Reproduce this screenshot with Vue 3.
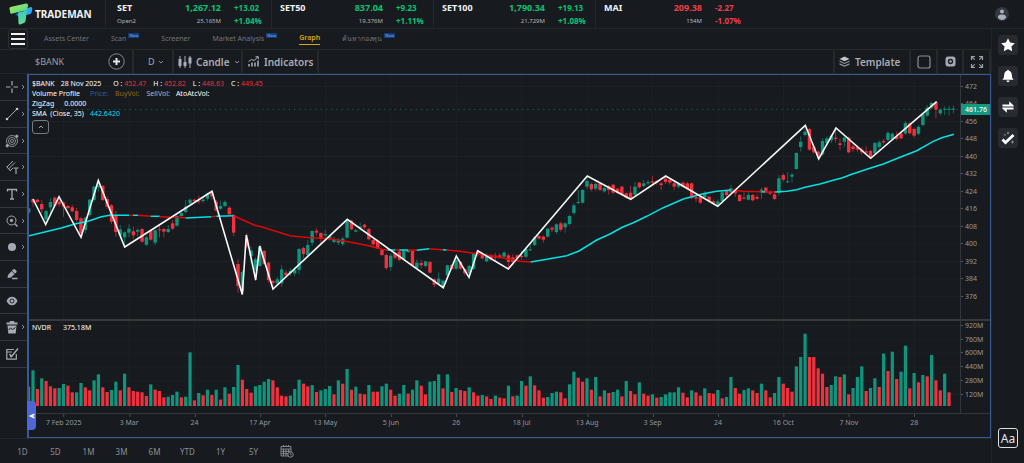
<script setup>
const tickers = [
  { name: 'SET', sub: 'Open2', value: '1,267.12', vol: '25,165M', diff: '+13.02', pct: '+1.04%', up: true },
  { name: 'SET50', sub: '', value: '837.04', vol: '19,376M', diff: '+9.23', pct: '+1.11%', up: true },
  { name: 'SET100', sub: '', value: '1,790.34', vol: '21,729M', diff: '+19.13', pct: '+1.08%', up: true },
  { name: 'MAI', sub: '', value: '209.38', vol: '154M', diff: '-2.27', pct: '-1.07%', up: false },
]
const nav = [
  { text: 'Assets Center' },
  { text: 'Scan', badge: true },
  { text: 'Screener' },
  { text: 'Market Analysis', badge: true },
  { text: 'Graph', active: true },
  { text: 'ค้นหากองทุน', badge: true },
]
const ranges = ['1D', '5D', '1M', '3M', '6M', 'YTD', '1Y', '5Y']
const tools = [
  { id: 'cross', label: 'Crosshair', more: true },
  { id: 'line', label: 'Trend line', more: true },
  { id: 'fib', label: 'Fibonacci', more: true },
  { id: 'pitch', label: 'Pitchfork', more: true },
  { id: 'text', label: 'Text', more: true },
  { id: 'zoom', label: 'Zoom', more: true },
  { id: 'dot', label: 'Magnet', more: true },
  { id: 'pen', label: 'Pen', more: false },
  { id: 'eye', label: 'Visibility', more: false },
  { id: 'trash', label: 'Delete', more: true },
  { id: 'note', label: 'Note', more: false },
]

/* plot area, in chart units */
const X0 = 29
const Y0 = 75
const W = 931
const H = 338
const STEP = 4.362
const xOf = (i) => 33 + (i - 1) * STEP

/* volume bars: colour + height in thirds of a unit */
const volumeText =
  'g58 g107 r51 g83 r75 r59 r53 g54 g66 r61 r41 g41 g69 r56 r47 g77 g95 r56 r42 g48 g73 r47 g97 r56 r45 r43 r41 r30 g65 r49 r45 r26 g28 g33 g43 r26 g28 g161 r17 g39 r32 g49 r33 g49 r19 g56 r37 g57 g123 r79 r51 r40 g59 g63 g73 g81 r77 r56 r31 r29 g31 g51 g79 r67 r59 g63 r42 g47 g51 g60 r35 g77 ' +
  'r67 g111 r49 g58 r37 r35 g63 r43 r43 g59 g67 r49 r31 g37 g63 r37 g49 g77 r61 r35 g73 g75 g95 r53 g95 r42 g54 r48 r45 g56 r41 r31 g33 r29 r21 g31 r25 r23 g61 r29 g31 g75 r61 g89 r62 r47 r25 g27 g39 g43 r41 r23 g65 g103 r85 r73 g83 r49 g87 r29 g47 r39 g42 g49 r29 g75 r45 r35 g71 r37 r31 g35 r25 g27 g35 g41 g41 g56 ' +
  'r40 r26 g47 r41 r31 g53 r39 r37 g48 r23 g27 g87 r54 r37 g48 g53 r47 r39 g67 r47 r26 g39 g87 r67 r54 r43 g119 g147 g217 r147 r147 r113 r97 r57 g63 g89 r87 g95 r35 g54 g87 g119 r45 g54 g83 r57 g157 r105 g163 r81 g103 g181 r53 g99 r71 g93 r89 g153 r77 r47 g97 r41'
const volumes = volumeText.split(' ').map((s, i) => ({
  x: xOf(i),
  h: Number(s.slice(1)) / 3,
  up: s[0] === 'g',
}))

/* candles: colour, body top, body bottom [, wick top, wick bottom] in thirds below base */
const segments = [
  { from: 0, base: 450, data:
    'g175,188 r148,157,146,170 r149,156 r162,178,150,190 g183,208,180,215 g156,172,145,190 r143,167 r155,163,145,170 r158,170,155,200 r168,174 r172,184,165,187 r183,210,174,215 r205,250,200,262 g203,240,200,250 g149,195,147,200 g110,150,107,155 g108,112,90,125 r108,150 r147,170,140,176 r166,215,162,222 r195,246,182,260 g238,256,225,268 g247,262,244,288 g236,248,223,262 r244,256,230,268 g240,245,235,260 r237,275 g262,284,258,288 r242,269 g241,278,236,285 r238,241,225,262 r237,245,234,262 g237,246,225,249 r220,236,210,240 g198,227,194,230 g189,198 g170,186,150,190 g149,160,146,165 r149,153 r152,155,137,162 g149,153,140,160 g130,146,128,152 r127,139,122,148 r155,182,150,185 g168,176,152,180 g156,168,150,172 r173,193,168,197 r195,248,192,258 r342,408,328,428 g366,425,360,435 r268,290,250,295 g302,318,290,340 g328,360,322,392 g290,348,285,350 r303,342 r338,390,335,398 r393,399,390,415 g388,400,380,404' },
  { from: 58, base: 570, data:
    'g238,280,226,290 r248,256,240,262 g243,250,235,258 g240,250,232,258 g177,240,174,252 r174,192,170,206 g165,195,150,200 g123,158,121,168 r122,128,114,137 r129,145,127,165 g132,136,120,142 g139,148,136,152 g149,156,140,160 g153,158,144,165 g146,162,140,168 g90,143,88,146 r92,118 g121,125,117,127 g110,114,98,122 r104,112,102,118 r117,148 r150,163,146,172 r152,175,148,178 r180,195 r195,234,190,240 g197,231,190,242 r190,203,186,208 r185,210,182,213 g182,208,178,210 g180,186 r183,226 g218,234,208,238 r219,226,210,236 g214,228,212,232 r216,248,213,250 r268,284,264,292 g266,280,248,284 g272,288 g226,256,224,262 r225,237,222,240 g210,236,205,240 r216,236 r238,250,236,256 g228,250,224,258 g192,236,188,240 r183,193,180,200 r192,205 g196,214,190,217 r195,209 r197,203,188,212' },
  { from: 108, base: 480, data:
    'r286,292,280,296 g278,290,273,294 r286,306,280,324 r292,306,282,316 r286,294 r287,291,272,300 g267,290,262,294 g268,271,248,273 g232,255 r228,236 r230,239,226,248 g206,230 r203,209,200,216 g193,216,190,222 r190,209,185,215 g190,202,187,218 g168,192,164,196 g136,159,130,164 g126,129,90,133 g90,128 g63,80,50,88 r72,88,68,94 g72,86,66,92 r70,90 g84,94,78,98 r78,90,74,104 r74,98,72,102 r86,98,84,102 r80,104 r100,113,97,116 r98,116,78,118 g80,104,66,108 r68,82,66,86 g70,78,60,82 g66,70,60,76 r64,68,48,78 r63,68,60,74 r70,75,66,90 r56,66,50,72 r60,68,56,74 r70,80,66,90 g72,80,68,86 r68,80,65,84 r70,86,66,90 r70,114 r112,116,106,126 r110,128,104,132 g100,112,94,116 r110,124 r124,130,118,136 g124,134,118,140' },
  { from: 159, base: 225, data:
    'g352,378,346,382 r348,360,344,366 g340,352,330,356 r347,355,344,366 r360,378 r368,371,350,373 g360,374,352,376 r360,376 r366,371,358,374 g344,352,338,372 r338,352,336,356 r350,356,346,360 r358,372,350,376 g310,354,300,362 r300,314,295,320 g319,322,292,324 g299,305,295,322 g234,282,232,284 g200,216,184,230 g170,180,152,184 r162,224 r215,232,210,236 r230,242,226,252 g198,238,190,242 g190,204,184,210 g182,196,178,204 r188,192,160,202 r205,210,190,225 g188,200,184,215 r188,232 r214,222,208,230 r217,224,212,232 r224,232,216,238 r229,233,214,236 r228,246,224,250 g204,235,200,240 g202,216,196,230 r198,202,192,208 g174,195,168,200 g176,192,172,196 r184,192,170,196 r176,190,168,192 g144,175,138,180 r145,175 r162,182,158,188 g156,176,150,180 g118,150,114,154 g98,122,90,126 g84,98,80,102 r82,104,78,130 g104,115,100,122 g101,104,94,120 g101,104,92,122 g101,104,92,115' },
]
const candles = segments.flatMap((seg) =>
  seg.data.split(' ').map((s, k) => {
    const n = s.slice(1).split(',').map((v) => (Number(v) + seg.base) / 3)
    return {
      x: xOf(seg.from + k),
      up: s[0] === 'g',
      top: n[0],
      h: Math.max(1, n[1] - n[0]),
      hi: n[2] ?? n[0] - 1,
      lo: n[3] ?? n[1] + 1,
    }
  }),
)

const zigzag =
  '33,199 45.7,224.5 59,196.7 81,237.3 98.3,180.5 124.7,247 212,191.3 242.3,294.5 246.3,235 255.7,280 259.7,246 273,289 347.3,219.3 443.3,287.7 456.3,256 469,277.3 477.7,250.7 508.3,269 587.3,176 630.7,199.3 665.7,176 717.7,206.3 805.3,125.3 818.7,159 836,128 870.7,158.3 936.7,101.7'

const sma = [
  { up: true, pts: '29,235.7 44.7,232 61.3,228 74.7,224 88,221.3 101.3,216.7 109.7,215.3 129,215.3' },
  { up: false, pts: '129,215.3 133,215.3' },
  { up: true, pts: '133,215.3 138,215.3' },
  { up: false, pts: '138,215.3 150.7,216.3' },
  { up: true, pts: '150.7,216.3 159.7,216.3' },
  { up: false, pts: '159.7,216.7 185.7,217.7' },
  { up: true, pts: '185.7,218 211.3,216.7' },
  { up: false, pts: '211.3,216.7 216.3,216.3' },
  { up: true, pts: '216.3,216.3 233.7,215.7' },
  { up: false, pts: '233.7,215.7 241.3,219.3 254.7,225.3 261.3,226.7 290,235.7 310,237.7 330,238.7 350,242 370,246 381.7,249.3 387.3,250' },
  { up: true, pts: '387.3,250 395.3,250' },
  { up: false, pts: '395.3,250 399.3,250' },
  { up: true, pts: '399.3,250 408,250' },
  { up: false, pts: '408,250 416.7,250.3' },
  { up: true, pts: '416.7,250.3 429.3,248.7' },
  { up: false, pts: '429.3,248.7 442.7,249.7' },
  { up: true, pts: '442.7,249.7 446.7,250' },
  { up: false, pts: '446.7,250 460,251.3 473.3,253.3 493.3,256 508.3,259 520,261.3 530.7,262' },
  { up: true, pts: '530.7,262 546.7,259.3 566.7,255.7 579,251 596.7,240 610,234 622.3,227.3 633.3,222.7 646.7,216.3 663.3,207.7 683.3,199 703.3,193.7 716.7,191.3 731.3,190' },
  { up: false, pts: '731.3,190 743.3,191.3 761.7,191.7' },
  { up: true, pts: '761.7,191.7 765,192' },
  { up: false, pts: '765,192 775,192' },
  { up: true, pts: '775,192 786.7,191.3 796.7,189.7 805,187.3 820,184 835,179.7 841.7,178 853.3,173.7 866.7,169.3 883.3,164 900,157.3 916.7,150.7 933.3,141.3 941.7,137.7 954,134.3' },
]

const prices = [472, 464, 456, 448, 440, 432, 424, 416, 408, 400, 392, 384, 376].map((v, i) => ({
  text: String(v),
  y: 86.5 + i * 17.5,
}))
const volTicks = ['920M', '760M', '600M', '440M', '280M', '120M'].map((text, i) => ({
  text,
  y: 326 + i * 13.7,
}))
const dates = ['7 Feb 2025', '3 Mar', '24', '17 Apr', '13 May', '5 Jun', '26', '18 Jul', '13 Aug', '3 Sep', '24', '16 Oct', '7 Nov', '28'].map((text, i) => ({
  text,
  x: 63.7 + i * 65.43,
}))
const pctX = (x) => ((x - X0) / W) * 100 + '%'
const pctY = (y) => ((y - Y0) / H) * 100 + '%'
</script>

<template>
  <div class="app">
    <header class="top">
      <a class="brand" href="#">
        <svg class="logo" viewBox="0 0 24 22" aria-hidden="true">
          <defs>
            <linearGradient id="lg1" x1="0" y1="0" x2="1" y2="1">
              <stop offset="0" stop-color="#b4ee52" /><stop offset="1" stop-color="#3ecf9c" />
            </linearGradient>
            <linearGradient id="lg2" x1="0" y1="0" x2="0" y2="1">
              <stop offset="0" stop-color="#3ec7c4" /><stop offset="1" stop-color="#5fe08a" />
            </linearGradient>
          </defs>
          <path d="M15 6 L22 4 Q23.500 4 23.300 6 L22.600 9.500 Q22 11 20.500 11.300 L15 12.500z" fill="#2ea8f0" />
          <path d="M6 11 L10 10.500 V14z" fill="#2468e8" />
          <path d="M1.500 4 L17 .500 Q19.500 .300 19 3 L18 7 L2.500 10.800 Q1.500 11 1.200 9.500 L.500 5.500 Q.400 4.300 1.500 4z" fill="url(#lg1)" />
          <path d="M9 9.500 L18 7.200 L16.500 18 Q16.300 19.500 15 20 L11 21.500 Q9.500 21.800 9.500 20z" fill="url(#lg2)" />
        </svg>
        <span class="brand-name">TRADEMAN</span>
      </a>
      <div v-for="t in tickers" :key="t.name" class="ticker" :class="t.up ? 'up' : 'down'">
        <div class="col names"><b>{{ t.name }}</b><small>{{ t.sub }}</small></div>
        <div class="col values"><b class="num">{{ t.value }}</b><small>{{ t.vol }}</small></div>
        <div class="col diffs"><b>{{ t.diff }}</b><b>{{ t.pct }}</b></div>
      </div>
      <button class="avatar" aria-label="Account">
        <svg viewBox="0 0 14 14"><circle cx="7" cy="7" r="7" fill="#333841" /><circle cx="7" cy="4.500" r="2" fill="#a9b0bd" /><path d="M2.800 10.500 Q3 7.500 7 7.500 T11.200 10.500 Q9.500 13 7 13 T2.800 10.500z" fill="#a9b0bd" /></svg>
      </button>
    </header>

    <div class="body">
      <main class="main">
        <nav class="nav">
          <button class="burger" aria-label="Menu"><i></i><i></i><i></i></button>
          <a v-for="n in nav" :key="n.text" href="#" class="nav-item" :class="{ active: n.active }">
            <span class="nav-text">{{ n.text }}</span><span v-if="n.badge" class="badge">New</span>
          </a>
        </nav>

        <div class="toolbar">
          <label class="symbol"><input type="text" value="$BANK" aria-label="Symbol" /></label>
          <div class="cell add"><button class="plus" aria-label="Add symbol">
            <svg viewBox="0 0 17 17"><circle cx="8.500" cy="8.500" r="7.700" fill="none" stroke="#84888f" /><path d="M8.500 5v7M5 8.500h7" stroke="#e2e5ea" stroke-width="2" /></svg>
          </button></div>
          <button class="cell period">D
            <svg class="chev" viewBox="0 0 6 6"><path d="M1 2l2 2 2-2" /></svg>
          </button>
          <button class="cell style"><svg class="ic14" viewBox="0 0 14 14"><path d="M2 1v12M7 1v12M12 1v12" stroke="#aab0bb" /><path d="M.500 4h3v7h-3zM5.500 7h3v4h-3zM10.500 2.500h3v6h-3z" fill="#aab0bb" /></svg>
            <b>Candle</b>
            <svg class="chev end" viewBox="0 0 6 6"><path d="M1 2l2 2 2-2" /></svg>
          </button>
          <button class="cell ind"><svg class="ic11" viewBox="0 0 11 11"><path d="M.500 5.500L3.500 3.500 6 4.500 10 1M7.500 .700h2.800v2.600" fill="none" stroke="#aab0bb" /><path d="M1 10.500V8M4 10.500V6.500M7 10.500V6.500M10 10.500V4.500" stroke="#aab0bb" stroke-width="1.500" /></svg>
            <b>Indicators</b>
          </button>
          <span class="spacer"></span>
          <button class="cell tpl"><svg class="ic11" viewBox="0 0 11 11"><path d="M5.500 .500l5 2.400-5 2.400-5-2.400z" fill="#c4c8cf" /><path d="M.500 4.600l5 2.300 5-2.300v1.200l-5 2.300-5-2.300zM.500 7.300l5 2.300 5-2.300v1.200l-5 2.300-5-2.300z" fill="#989da6" /></svg>
            <b>Template</b>
          </button>
          <button class="cell sq" aria-label="Layout"><svg class="ic14" viewBox="0 0 14 14"><rect x="1" y="1" width="12" height="12" rx="2" fill="none" stroke="#8b9099" stroke-width="1.200" /></svg></button>
          <button class="cell sq mid" aria-label="Settings"><svg class="ic11" viewBox="0 0 11 11"><rect x=".500" y=".500" width="10" height="10" rx="2.500" fill="#a3a9b4" /><circle cx="5.500" cy="5.500" r="2" fill="none" stroke="#171a1e" stroke-width="1.300" /></svg></button>
          <button class="cell sq" aria-label="Full screen"><svg class="ic14" viewBox="0 0 14 14" fill="none" stroke="#9ba0aa" stroke-width="1.200"><path d="M1.500 5V1.500H5M1.500 1.500l3.200 3.200M9 1.500h3.500V5M12.500 1.500L9.300 4.700M1.500 9v3.500H5M1.500 12.500l3.200-3.200M9 12.500h3.500V9M12.500 12.500L9.300 9.300" /></svg></button>
        </div>

        <div class="work">
          <div class="tools">
            <button v-for="t in tools" :key="t.id" class="tool" :aria-label="t.label">
              <svg class="tool-ic" viewBox="0 0 14 14" fill="none" stroke="#a4a9b3" stroke-width="1">
                <path v-if="t.id === 'cross'" d="M7 1v4.500M7 8.500V13M1 7h4.500M8.500 7H13" stroke-width="1.200" />
                <g v-if="t.id === 'line'"><path d="M2.500 11.500l9-9" /><circle cx="2" cy="12" r="1.300" fill="#c3c7ce" stroke="none" /><circle cx="12" cy="2" r="1.300" fill="#c3c7ce" stroke="none" /></g>
                <g v-if="t.id === 'fib'" stroke-width=".8"><circle cx="7" cy="7" r="5.500" /><circle cx="7" cy="7" r="3.500" /><circle cx="7" cy="7" r="1.500" /><circle cx="2.200" cy="11.800" r="1.200" fill="#a4a9b3" /><circle cx="11.800" cy="2.200" r="1.200" fill="#a4a9b3" /></g>
                <g v-if="t.id === 'pitch'"><path d="M2 7L8 1M3.500 9L10 2.500M5 11l3-3M1.500 6.500l4 4.500" /><path d="M8.500 8h5M11 8v6" stroke-width="1.200" /></g>
                <path v-if="t.id === 'text'" d="M2.500 4.500v-2h9v2M7 2.500v9.500M5 12h4" stroke-width="1.300" />
                <g v-if="t.id === 'zoom'"><circle cx="6.500" cy="6.500" r="4.500" /><circle cx="6.500" cy="6.500" r="1.200" fill="#a4a9b3" /><path d="M9.800 9.800l2.700 2.700" stroke-width="1.500" /></g>
                <circle v-if="t.id === 'dot'" cx="7" cy="7" r="4" fill="#a4a9b3" stroke="none" />
                <g v-if="t.id === 'pen'"><path d="M2.500 11L3 8l5-5.500q1-1 2.200 0l1 1q1 1 0 2L6 10.500z" fill="#a4a9b3" stroke="none" /><path d="M6.500 3.700l3.500 3.500" stroke="#171a1e" stroke-width=".8" /><path d="M7 11.500h5.500" stroke-width="1.500" /></g>
                <g v-if="t.id === 'eye'"><path d="M1.500 7Q3.500 2.800 7 2.800T12.500 7Q10.500 11.200 7 11.200T1.500 7z" fill="#a4a9b3" stroke="none" /><circle cx="7" cy="7" r="2" stroke="#171a1e" stroke-width=".9" /></g>
                <g v-if="t.id === 'trash'"><path d="M1.500 3.500h11M5 2h4M4.500 2.500h5" stroke-width="1.800" /><path d="M2.500 5.500h9l-.8 8h-7.400z" fill="#a4a9b3" stroke="none" /><path d="M3.500 10l2-2 2 1.500 3-2" stroke="#171a1e" /></g>
                <g v-if="t.id === 'note'"><path d="M9 2.500H1.800v9.700h9.500V7M1.800 5H7" stroke-width="1.200" /><path d="M4.500 7l2 2.500L13 1.500M5 9.500h2" stroke-width="1.500" /></g>
              </svg>
              <svg v-if="t.more" class="more" viewBox="0 0 4 6"><path d="M1 1l2 2-2 2" /></svg>
            </button>
          </div>

          <section class="chart" aria-label="Price chart">
            <div class="plot-row">
              <div class="plot">
                <svg class="canvas" :viewBox="`${X0} ${Y0} ${W} ${H}`" preserveAspectRatio="none">
                  <g stroke="#1d2125">
                    <line v-for="p in prices" :key="p.text" :x1="X0" :x2="X0 + W" :y1="p.y" :y2="p.y" />
                    <line v-for="p in volTicks" :key="p.text" :x1="X0" :x2="X0 + W" :y1="p.y" :y2="p.y" />
                    <line v-for="d in dates" :key="d.x" :x1="d.x" :x2="d.x" :y1="Y0" :y2="Y0 + H" />
                  </g>
                  <line :x1="X0" :x2="X0 + W" y1="109.500" y2="109.500" stroke="#1a5c50" stroke-dasharray="1.300 4" />
                  <g v-for="c in candles" :key="c.x" :class="c.up ? 'c-up' : 'c-down'">
                    <rect :x="c.x - 0.5" :y="c.hi" width="1" :height="c.lo - c.hi" opacity=".65" />
                    <rect :x="c.x - 1.7" :y="c.top" width="3.400" :height="c.h" />
                  </g>
                  <rect v-for="v in volumes" :key="v.x" :class="v.up ? 'c-up' : 'c-down'" :x="v.x - 1.6" :y="406 - v.h" width="3.200" :height="v.h" />
                  <polyline v-for="(s, i) in sma" :key="i" :points="s.pts" fill="none" :stroke="s.up ? '#00e2e4' : '#e00606'" stroke-width="1.500" />
                  <polyline :points="zigzag" fill="none" stroke="#f8f8f8" stroke-width="1.600" />
                  <rect :x="X0" y="319" :width="W" height="2" fill="#35393b" />
                </svg>
                <div class="legend">
                  <p><b>$BANK</b><b class="g6">28 Nov 2025</b><b class="g12">O : <i>452.47</i></b><b class="g7">H : <i>452.82</i></b><b class="g7">L : <i>448.63</i></b><b class="g7">C : <i>449.45</i></b></p>
                  <p><b>Volume Profile</b><span class="g10 blue">Price:</span><span class="g7 brown">BuyVol:</span><span class="g7">SellVol:</span><b class="g6">AtoAtcVol:</b></p>
                  <p><b>ZigZag</b><b class="g10">0.0000</b></p>
                  <p><b>SMA&nbsp; (Close, 35)</b><b class="g6 cyan">442.6420</b></p>
                  <button class="fold" aria-label="Collapse legend"><svg viewBox="0 0 6 6"><path d="M1 4l2-2 2 2" /></svg></button>
                </div>
                <div class="legend2"><b>NVDR</b><b class="g12">375.18M</b></div>
              </div>
              <div class="yaxis">
                <span v-for="p in prices" :key="p.text" class="ylab" :style="{ top: pctY(p.y) }">{{ p.text }}</span>
                <span class="ylab tag">461.76</span>
                <span class="ysep"></span>
                <span v-for="p in volTicks" :key="p.text" class="ylab" :style="{ top: pctY(p.y) }">{{ p.text }}</span>
              </div>
            </div>
            <div class="xaxis">
              <div class="xinner">
                <span v-for="d in dates" :key="d.x" class="xlab" :style="{ left: pctX(d.x) }">{{ d.text }}</span>
              </div>
            </div>
            <button class="handle" aria-label="Scroll back"><svg viewBox="0 0 6 6"><path d="M5.500 .500v1.800L3.300 3l2.200 .7v1.800L.5 3.600V2.400z" fill="#fff" /></svg></button>
          </section>
        </div>

        <footer class="ranges">
          <button v-for="r in ranges" :key="r">{{ r }}</button>
          <button class="cal" aria-label="Pick dates">
            <svg viewBox="0 0 14 14" fill="none" stroke="#8b8f96"><path d="M1 2.500h10v9.500H1zM1 5h10M3.500 1v2M6 1v2M8.500 1v2M1 7.300h10M1 9.600h7M3.500 5v7M6 5v7M8.500 5v3" stroke-width=".9" /><circle cx="10.500" cy="10.500" r="2.700" fill="#171a1e" /><path d="M10.500 9v1.700h1.300" stroke-width=".8" /></svg>
          </button>
        </footer>
      </main>

      <aside class="side">
        <button aria-label="Favourites"><svg viewBox="0 0 14 14"><path d="M7 .300l2.100 4.300 4.700 .7-3.400 3.300.8 4.700L7 11.100l-4.200 2.200.8-4.700L.2 5.300l4.700-.7z" fill="#fff" /></svg></button>
        <button aria-label="Alerts"><svg viewBox="0 0 14 14"><path d="M7 .800q.9 0 .9 1Q10.800 2.500 10.800 6q0 3 1.800 4.800H1.400Q3.200 9 3.200 6q0-3.500 2.900-4.200 0-1 .9-1zM5.500 11.600h3Q8.500 13.200 7 13.200t-1.500-1.600z" fill="#fff" /></svg></button>
        <button aria-label="Trade"><svg viewBox="0 0 14 14"><path d="M8.200 1.300L12.800 5.800v.7H1.500V4.600h6.700zM5.800 12.700L1.200 8.200v-.7h11.300v1.900H5.800z" fill="#fff" /></svg></button>
        <button aria-label="Tasks"><svg viewBox="0 0 14 14"><path d="M1.500 8.500l3 3L12.500 4" fill="none" stroke="#fff" stroke-width="2.800" /><path d="M3.200 3.200l1.300 1.300M4.500 3.200L3.200 4.500M7 .800v2.400M5.800 2h2.400M11.500 9.500v3M10 11h3" stroke="#8b9099" stroke-width=".9" /></svg></button>
        <button class="aa">Aa</button>
      </aside>
    </div>
  </div>
</template>

<style>
html, body { background: #171a1e; }
</style>

<style scoped>
.app {
  min-height: 100vh;
  display: flex;
  flex-direction: column;
  background: #171a1e;
  color: #d5d7da;
  font-family: "Noto Sans", "Open Sans", "Liberation Sans", sans-serif;
  font-size: 7px;
  overflow: hidden;
}
.app * { box-sizing: border-box; }
button { background: none; border: 0; padding: 0; margin: 0; font: inherit; color: inherit; cursor: pointer; }
a { color: inherit; text-decoration: none; }
svg { display: block; }

.top { display: flex; height: 29px; border-bottom: 1px solid #24282b; }
.brand { width: 105px; padding-left: 9px; display: flex; align-items: center; gap: 2px; flex: none; }
.logo { width: 24px; height: 22px; }
.brand-name { font-weight: 700; font-size: 10px; color: #f2f3f4; }
.ticker { width: 162px; flex: none; display: flex; padding-left: 8px; border-left: 1px solid #24282b; }
.ticker:nth-child(2) { width: 166px; padding-left: 11px; }
.col { display: flex; flex-direction: column; }
.col > * { height: 13px; line-height: 16px; }
.col small { font-size: 6px; color: #b2b6bb; }
.names { flex: 1; font-size: 9px; color: #f2f3f4; }
.values { font-size: 9px; text-align: right; }
.diffs { width: 50px; padding-left: 13px; font-size: 8px; flex: none; }
.diffs b { line-height: 15px; }
.up .num, .up .diffs { color: #0cc274; }
.down .num, .down .diffs { color: #ee3e4c; }
.ticker:nth-child(5) { width: 157px; }
.avatar { margin-left: auto; margin-right: 15px; width: 14px; align-self: center; }
.avatar svg { width: 14px; height: 14px; }

.body { display: flex; flex: 1; }
.main { flex: 1; min-width: 0; display: flex; flex-direction: column; }
.nav { height: 21px; display: flex; align-items: center; border-bottom: 1px solid #24282b; gap: 22px; padding-left: 8px; color: #72757a; }
.burger { width: 20px; height: 20px; border: 1px solid #2c3035; border-radius: 3px; display: flex; flex-direction: column; justify-content: space-between; padding: 3px 2px 3px 2px; margin-right: -6px; }
.burger i { height: 2px; background: #f1f1f1; }
.nav-item { display: flex; align-items: flex-start; height: 13px; line-height: 12px; gap: 2px; white-space: nowrap; }
.badge { background: #123f7c; color: #5a93dc; font-size: 4px; line-height: 5px; height: 5px; padding: 0 1px; font-weight: 700; }
.active .nav-text { color: #dba310; font-weight: 600; border-bottom: 1px solid #dba310; }
.nav-item.active { height: 14px; }

.toolbar { height: 24px; display: flex; color: #a4a8ae; font-size: 9px; border-bottom: 1px solid #22262a; }
.symbol { display: flex; align-items: center; padding-left: 35px; }
.symbol input { width: 72px; background: none; border: 0; outline: 0; padding: 0; font: inherit; color: #9a9ea4; }
.cell { display: flex; align-items: center; border-right: 2px solid #25292c; height: 100%; }
.cell b { font-weight: 600; font-size: 10px; color: #a9adb4; }
.add { width: 27px; padding-left: 1px; }
.plus svg { width: 17px; height: 17px; }
.period { width: 40px; padding-left: 14px; gap: 3px; }
.chev { width: 6px; height: 6px; fill: none; stroke: #8c9096; }
.chev.end { margin-left: auto; margin-right: 1px; }
.style { width: 69px; padding-left: 4px; gap: 4px; }
.ind { width: 76px; padding-left: 5px; gap: 5px; }
.spacer { flex: 1; }
.tpl { width: 78px; padding-left: 4px; gap: 5px; border-left: 2px solid #25292c; }
.sq { width: 27px; justify-content: center; }
.sq.mid { width: 26px; }
.ic14 { width: 14px; height: 14px; flex: none; }
.ic11 { width: 11px; height: 11px; flex: none; }

.work { display: flex; flex: 1; }
.tools { width: 27px; }
.tool { width: 27px; height: 27px; display: flex; align-items: center; border-bottom: 1px solid #34383b; padding-left: 5px; gap: 2px; }
.tool:nth-child(3n) { height: 26px; }
.tool-ic { width: 14px; height: 14px; }
.more { width: 4px; height: 6px; fill: none; stroke: #8b8f96; stroke-width: 1; }

.chart { position: relative; flex: 1; min-width: 0; border: 1px solid #3b5a94; border-left-width: 2px; display: flex; flex-direction: column; }
.plot-row { display: flex; }
.plot { position: relative; flex: 1; min-width: 0; }
.canvas { width: 100%; height: 338px; }
.c-up { fill: #0f957d; }
.c-down { fill: #f0323f; }
.yaxis { position: relative; width: 30px; border-left: 1px solid #33373b; }
.ylab { position: absolute; left: 0; height: 10px; line-height: 10px; margin-top: -5px; color: #95989c; white-space: nowrap; }
.ylab::before { content: ""; display: inline-block; width: 2px; height: 1px; background: #55595d; margin-right: 2px; vertical-align: 2px; }
.tag { top: 34px; left: 0; width: 29px; height: 11px; line-height: 11px; background: #0f9a81; color: #fff; font-weight: 500; }
.tag::before { background: #0f9a81; }
.ysep { position: absolute; left: 0; right: 0; top: 244px; height: 2px; background: #35393b; }
.xaxis { border-top: 1px solid #33373b; height: 24px; padding-right: 30px; }
.xinner { position: relative; }
.xlab { position: absolute; transform: translateX(-50%); top: 4px; line-height: 10px; color: #95989c; white-space: nowrap; }
.xlab::before { content: ""; position: absolute; left: 50%; top: -4px; width: 1px; height: 3px; background: #4a4e52; }

.legend { position: absolute; left: 3px; top: 4px; }
.legend p { margin: 0; height: 10px; line-height: 10px; display: flex; white-space: nowrap; }
.legend b, .legend2 b { font-weight: 400; color: #fff; }
.legend i { font-style: normal; color: #e5323f; }
.legend span { color: #b5b8bc; }
.legend .blue { color: #2a638f; }
.legend .brown { color: #9a671c; }
.legend .cyan { color: #0cdfe2; }
.g6 { margin-left: 6px; }
.g7 { margin-left: 7px; }
.g10 { margin-left: 10px; }
.g12 { margin-left: 12px; }
.fold { display: flex; align-items: center; justify-content: center; width: 17px; height: 14px; margin-top: 1px; border: 1px solid #777b80; border-radius: 3px; }
.fold svg { width: 6px; height: 6px; fill: none; stroke: #a5a8ac; }
.legend2 { position: absolute; left: 3px; top: 248px; line-height: 10px; display: flex; }
.handle { position: absolute; left: -2px; bottom: 7px; width: 9px; height: 29px; background: #4e66d6; border-radius: 0 4px 4px 0; display: flex; align-items: center; justify-content: center; }
.handle svg { width: 6px; height: 6px; }

.ranges { height: 25px; display: flex; align-items: center; padding-left: 6px; color: #8b8f96; font-size: 8px; border-top: 1px solid #22262a; }
.ranges button { width: 33px; text-align: center; }
.ranges .cal { display: flex; justify-content: center; }
.cal svg { width: 14px; height: 14px; }

.side { width: 33px; border-left: 1px solid #212529; padding: 6px 6px 15px; display: flex; flex-direction: column; gap: 11px; }
.side button { width: 20px; height: 20px; background: #272b31; border-radius: 3px; display: flex; align-items: center; justify-content: center; }
.side svg { width: 14px; height: 14px; }
.side .aa { margin-top: auto; background: none; border: 1px solid #e0e0e0; color: #e6e6e6; font-size: 12px; }
</style>
